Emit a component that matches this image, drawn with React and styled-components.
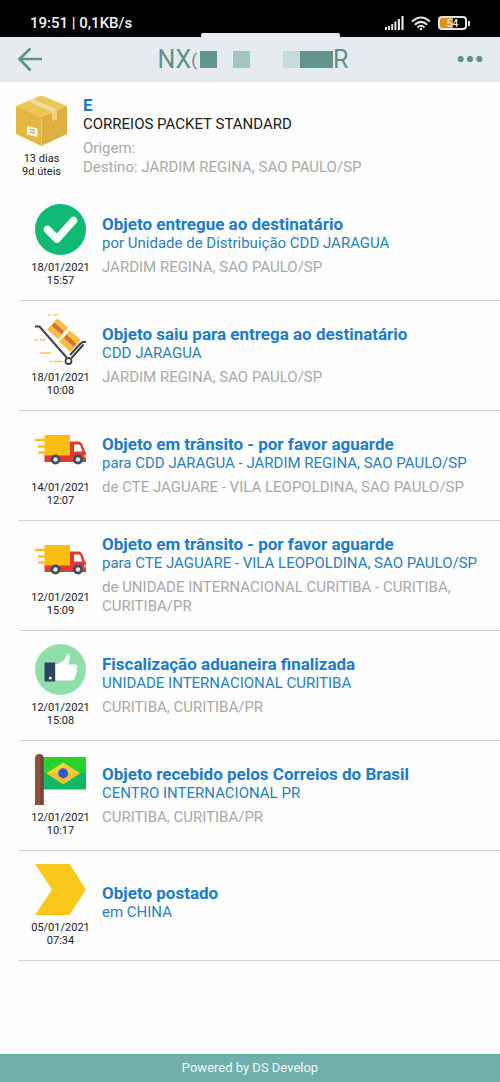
import styled, { createGlobalStyle } from "styled-components";

const events = [
  {
    icon: CheckIcon,
    date: "18/01/2021",
    time: "15:57",
    title: "Objeto entregue ao destinatário",
    detail: "por Unidade de Distribuição CDD JARAGUA",
    place: "JARDIM REGINA, SAO PAULO/SP",
  },
  {
    icon: TrolleyIcon,
    date: "18/01/2021",
    time: "10:08",
    title: "Objeto saiu para entrega ao destinatário",
    detail: "CDD JARAGUA",
    place: "JARDIM REGINA, SAO PAULO/SP",
  },
  {
    icon: TruckIcon,
    date: "14/01/2021",
    time: "12:07",
    title: "Objeto em trânsito - por favor aguarde",
    detail: "para CDD JARAGUA - JARDIM REGINA, SAO PAULO/SP",
    place: "de CTE JAGUARE - VILA LEOPOLDINA, SAO PAULO/SP",
  },
  {
    icon: TruckIcon,
    date: "12/01/2021",
    time: "15:09",
    title: "Objeto em trânsito - por favor aguarde",
    detail: "para CTE JAGUARE - VILA LEOPOLDINA, SAO PAULO/SP",
    place: "de UNIDADE INTERNACIONAL CURITIBA - CURITIBA, CURITIBA/PR",
  },
  {
    icon: ThumbIcon,
    date: "12/01/2021",
    time: "15:08",
    title: "Fiscalização aduaneira finalizada",
    detail: "UNIDADE INTERNACIONAL CURITIBA",
    place: "CURITIBA, CURITIBA/PR",
  },
  {
    icon: FlagIcon,
    date: "12/01/2021",
    time: "10:17",
    title: "Objeto recebido pelos Correios do Brasil",
    detail: "CENTRO INTERNACIONAL PR",
    place: "CURITIBA, CURITIBA/PR",
  },
  {
    icon: PostedIcon,
    date: "05/01/2021",
    time: "07:34",
    title: "Objeto postado",
    detail: "em CHINA",
  },
];

export default function App() {
  return (
    <>
      <GlobalStyle />
      <Page>
        <StatusBar>
          <span>19:51 | 0,1KB/s</span>
          <StatusIcons>
            <SignalIcon />
            <WifiIcon />
            <Battery>
              <BatteryBody>54</BatteryBody>
              <BatteryCap />
            </Battery>
          </StatusIcons>
          <Notch />
        </StatusBar>

        <Header>
          <IconButton aria-label="Voltar">
            <BackIcon />
          </IconButton>
          <Code>
            <span>NX</span>
            <Bracket>(</Bracket>
            <Mask $width={17} $color="#5f948f" $before={3} />
            <Mask $width={17} $color="#a3c4c1" $before={16} />
            <Mask $width={17} $color="#c6dcda" $before={33} />
            <Mask $width={33} $color="#63938f" $before={0} />
            <span>R</span>
          </Code>
          <IconButton aria-label="Mais opções">
            <MoreIcon />
          </IconButton>
        </Header>

        <main>
          <Summary>
            <Aside>
              <BoxIcon />
              <When>
                13 dias
                <br />
                9d úteis
              </When>
            </Aside>
            <Info>
              <Title as="h1">E</Title>
              <Service>CORREIOS PACKET STANDARD</Service>
              <Place>
                Origem:
                <br />
                Destino: JARDIM REGINA, SAO PAULO/SP
              </Place>
            </Info>
          </Summary>

          <Timeline>
            {events.map((event) => (
              <Event key={event.date + event.time}>
                <Aside>
                  <event.icon />
                  <When>
                    {event.date}
                    <br />
                    {event.time}
                  </When>
                </Aside>
                <Info>
                  <Title>{event.title}</Title>
                  <Detail>{event.detail}</Detail>
                  {event.place && <Place>{event.place}</Place>}
                </Info>
              </Event>
            ))}
          </Timeline>
        </main>

        <Footer>Powered by DS Develop</Footer>
      </Page>
    </>
  );
}

function SignalIcon() {
  return (
    <svg width="19" height="14" viewBox="0 0 19 14" fill="#e4e4e4">
      <rect x="0" y="11" width="2" height="3" />
      <rect x="3" y="10" width="2" height="4" />
      <rect x="6.2" y="8" width="2" height="6" />
      <rect x="9.4" y="5.5" width="2" height="8.5" />
      <rect x="12.8" y="3" width="2.2" height="11" />
      <rect x="16.4" y="0" width="2.2" height="14" />
    </svg>
  );
}

function WifiIcon() {
  return (
    <svg width="20" height="15" viewBox="0 0 20 15" fill="none" stroke="#e4e4e4" strokeWidth="2">
      <path d="M1 5.6Q10-2.6 19 5.6" />
      <path d="M3.8 8.7Q10 3 16.2 8.7" />
      <path d="M6.5 11.4Q10 8.2 13.5 11.4" />
      <circle cx="10" cy="13.1" r="1.3" fill="#e4e4e4" stroke="none" />
    </svg>
  );
}

function BackIcon() {
  return (
    <svg width="28" height="26" viewBox="0 0 28 26" fill="none" stroke="#5f918d" strokeWidth="2.6">
      <path d="M14.500 1.500 3.500 12l11 11.500M3.500 12H26" />
    </svg>
  );
}

function MoreIcon() {
  return (
    <svg width="28" height="8" viewBox="0 0 28 8" fill="#5f918d">
      <circle cx="4.700" cy="3" r="3.100" />
      <circle cx="14" cy="3" r="3.100" />
      <circle cx="23.300" cy="3" r="3.100" />
    </svg>
  );
}

function BoxIcon() {
  return (
    <Picture viewBox="0 0 51 51">
      <path d="M25.5.5 51 11 25.5 22 0 11z" fill="#edc659" />
      <path d="M0 11 25.5 22v29L0 39z" fill="#e5b743" />
      <path d="M51 11 25.5 22v29L51 39z" fill="#dfb03f" />
      <path d="m12 6 4.800-2L41 14.500v9.500l-5 2v-9.300z" fill="#f3dda0" />
      <path d="m36 16.700 5-2.200v9.500l-5 2z" fill="#ecd18a" />
      <path d="m11 31 10.500 2.500v8.500L11 39.500z" fill="#fffbe9" />
      <path d="m13.500 34 5.500 1.400M13.500 36.700l5.500 1.400" stroke="#b9a778" strokeWidth="1.200" />
    </Picture>
  );
}

function CheckIcon() {
  return (
    <Picture viewBox="0 0 51 51">
      <circle cx="25.500" cy="25.500" r="25.500" fill="#0fba74" />
      <path
        d="m12.500 25.500 9.500 9.500 16.500-18.500"
        fill="none"
        stroke="#fff"
        strokeWidth="7.600"
        strokeLinecap="round"
        strokeLinejoin="round"
      />
    </Picture>
  );
}

function TrolleyIcon() {
  return (
    <Picture viewBox="0 0 51 51" fill="none">
      <path d="m22.500 4.500 10.500 9-9.500 12L12 15.500z" fill="#fbbb49" />
      <path d="m19.500 8.500 9.500 9-2.500 3L17 12z" fill="#c97832" />
      <path d="m35 16.500 11 9.500-10.500 12L24 27.500z" fill="#fbbb49" />
      <path d="m31.500 20.500 9.500 9-2.500 3L29 24z" fill="#c97832" />
      <path
        d="M0 12.500h4.500L32 44M36.500 44 48.500 30.500M35 41 45.500 29.500l2.500-1.500h3"
        stroke="#3f4144"
        strokeWidth="2"
      />
      <circle cx="33.500" cy="47" r="3" stroke="#3f4144" strokeWidth="1.800" />
      <path
        d="M13 .900h3M18 .900h5M0 25.800h3M4.500 25.800h6M5 39h11M14.500 47.500h3M19 47.500h9"
        stroke="#f6c564"
        strokeWidth="1.400"
      />
    </Picture>
  );
}

function TruckIcon() {
  return (
    <Picture viewBox="0 0 51 51">
      <path d="M9.500 30h25V17.500h8.500c3 0 4 1.500 5 4.500l2 5.500c1 .5 1 1.500 1 2.500v8h-5.500L9.500 38z" fill="#e23935" />
      <path d="M9.500 11h25.500v20.500H9.500z" fill="#fdbd13" />
      <path
        d="M1 16h9M4 22.500h6M4.500 28.500h5"
        stroke="#fdbd13"
        strokeWidth="2.400"
        strokeLinecap="round"
      />
      <path d="M39 20.500h4.500c1 0 1.500.500 2 1.500l1.800 5.500H39z" fill="#fff" />
      <path d="M49 30.500h2v3h-2z" fill="#f6a79c" />
      <circle cx="20.500" cy="35.500" r="5" fill="#3c5060" />
      <circle cx="20.500" cy="35.500" r="2.200" fill="#e1e7eb" />
      <circle cx="43" cy="35.500" r="5" fill="#3c5060" />
      <circle cx="43" cy="35.500" r="2.200" fill="#e1e7eb" />
    </Picture>
  );
}

function ThumbIcon() {
  return (
    <Picture viewBox="0 0 51 51">
      <circle cx="25.500" cy="25.500" r="25.500" fill="#90dfaa" />
      <path
        d="M20 20.500c4-.5 9-3.500 10.500-6.500 1-1.800.8-3.500 1.500-4 1.500-.500 3 .5 3 3 0 3-1.500 5-1.500 7.500h6.500c3 0 3 4 .8 4.300 2.500.7 2 4-.5 4.300 2 .8 1.200 3.700-1 4 1.200 1.200.2 3.400-2 3.400H20z"
        fill="#fff"
      />
      <path d="M9.500 18.500h10.700v19H9.500z" fill="#2c4464" />
      <circle cx="15.300" cy="34" r="1.600" fill="#e8eef2" />
    </Picture>
  );
}

function FlagIcon() {
  return (
    <Picture viewBox="0 0 51 51">
      <path d="M8 3h43v16H8z" fill="#28d22e" />
      <path d="M8 19h43v16.500H8z" fill="#10b965" />
      <path d="M28.200 8.500 45 19.200l-16.800 11-16.800-11z" fill="#fbd235" />
      <path d="M11.400 19.200H45l-16.800 11z" fill="#f6bd31" />
      <circle cx="28.200" cy="19.200" r="5" fill="#3656d4" />
      <path d="M0 4.500Q0 0 4.300 0t4.300 4.500V51H0z" fill="#8a5142" />
      <path d="M5.500.500Q8.600 1 8.600 4.500V51H5.500z" fill="#784336" />
    </Picture>
  );
}

function PostedIcon() {
  return (
    <Picture viewBox="0 0 51 51">
      <path d="M0 0h34.500L51 25.500 34.500 51H0l17-25.500z" fill="#fac81b" />
    </Picture>
  );
}

const GlobalStyle = createGlobalStyle`
  * {
    box-sizing: border-box;
  }

  body {
    margin: 0;
    background-color: #fefefe;
    color: #202020;
    font-family: Roboto, "Liberation Sans", sans-serif;
  }

  h1, h2, p, ul {
    margin: 0;
    padding: 0;
  }
`;

const Page = styled.div`
  display: flex;
  flex-direction: column;
  min-height: 100vh;

  main {
    flex: 1;
  }
`;

const StatusBar = styled.div`
  position: relative;
  display: flex;
  align-items: center;
  justify-content: space-between;
  height: 37px;
  padding: 9px 30px 0;
  background-color: #000;
  color: #f0f0f0;
  font-size: 15px;
  font-weight: 500;
`;

const Notch = styled.div`
  position: absolute;
  bottom: 0;
  left: 50%;
  width: 139px;
  height: 4px;
  margin-left: -49px;
  border-radius: 2px 2px 0 0;
  background-color: #e6ecee;
`;

const StatusIcons = styled.div`
  display: flex;
  align-items: center;
  gap: 7px;
`;

const Battery = styled.div`
  display: flex;
  align-items: center;
  gap: 1px;
`;

const BatteryBody = styled.div`
  width: 29px;
  height: 14px;
  border: 2px solid #e4e4e4;
  border-radius: 4px;
  background: linear-gradient(90deg, #d8921f 50%, #000 50%);
  font-size: 10px;
  line-height: 11px;
  text-align: center;
`;

const BatteryCap = styled.div`
  width: 2px;
  height: 5px;
  background-color: #e4e4e4;
`;

const Header = styled.header`
  display: flex;
  align-items: center;
  justify-content: space-between;
  height: 45px;
  padding: 0 16px;
  background-color: #e6ecee;
`;

const IconButton = styled.button`
  display: flex;
  padding: 0;
  border: none;
  background: none;
  cursor: pointer;
`;

const Code = styled.div`
  display: flex;
  align-items: center;
  padding-left: 6px;
  color: #5f918d;
  font-size: 25px;
  line-height: 30px;
`;

const Bracket = styled.span`
  font-size: 17px;
`;

const Mask = styled.span`
  width: ${({ $width }) => $width}px;
  height: 17px;
  margin-left: ${({ $before }) => $before}px;
  background-color: ${({ $color }) => $color};
`;

const Summary = styled.section`
  display: flex;
  align-items: center;
  min-height: 109px;
`;

const Timeline = styled.ul`
  list-style: none;
`;

const Event = styled.li`
  display: flex;
  align-items: center;
  min-height: 110px;
  margin-left: 19px;
  border-bottom: 1px solid #cfcfcf;
`;

const Aside = styled.div`
  display: flex;
  flex: none;
  flex-direction: column;
  align-items: center;
  width: 83px;
`;

const Picture = styled.svg`
  width: 51px;
  height: 51px;
`;

const When = styled.p`
  margin-top: 6px;
  font-size: 11px;
  line-height: 13px;
  text-align: center;
`;

const Info = styled.div`
  flex: 1;
  padding: 0 12px 1px 0;
`;

const Title = styled.h2`
  color: #1b7cc9;
  font-size: 17px;
  font-weight: 700;
  line-height: 20px;
`;

const Detail = styled.p`
  margin-bottom: 5px;
  color: #2a80bd;
  font-size: 15px;
  line-height: 19px;
`;

const Service = styled(Detail)`
  color: #202020;
`;

const Place = styled.p`
  color: #a9a9a9;
  font-size: 15px;
  line-height: 19px;
`;

const Footer = styled.footer`
  height: 28px;
  background-color: #70b0ac;
  color: #eef8f7;
  font-size: 13px;
  line-height: 28px;
  text-align: center;
`;
